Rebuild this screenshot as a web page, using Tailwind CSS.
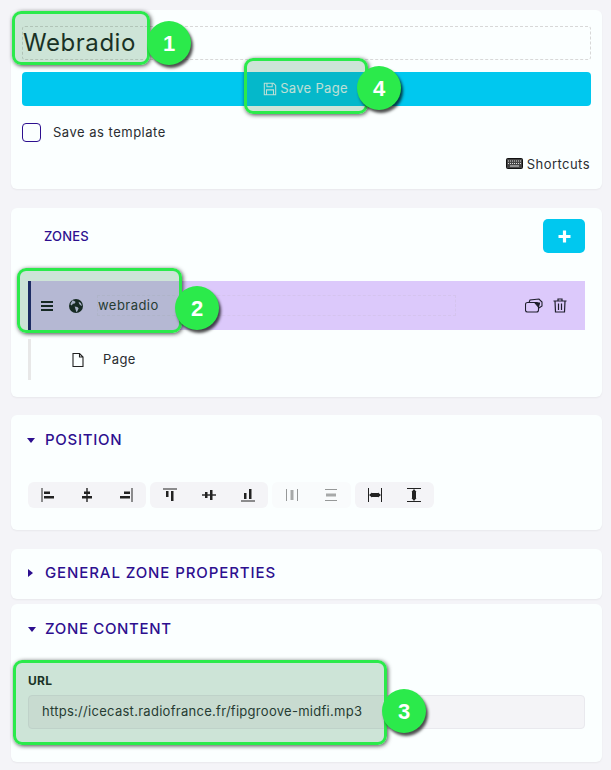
<!DOCTYPE html>
<html><head><meta charset="utf-8"><script src="https://cdn.jsdelivr.net/npm/@tailwindcss/browser@4"></script></head>
<body class="bg-[#f4f4f8] font-['Inter','Liberation_Sans',sans-serif] text-[#212529]">
<div class="relative w-[611px] h-[770px] overflow-hidden pt-[10px] pl-[11px] pr-[9px] flex flex-col">

<section class="h-[179px] shrink-0 bg-[#fbffff] rounded-md shadow-[0_1px_2px_rgba(0,0,0,0.05)] pl-[11px] pr-[11px] pt-[16px]">
  <div class="h-[34px] border border-dashed border-[#d8d8d8] rounded-[3px] flex items-center text-[24px] tracking-[0.55px] text-[#1b1f23] leading-none">Webradio</div>
  <div class="mt-[12px] h-[34px] bg-[#00c8ef] rounded-[4px] flex items-center justify-center gap-[3px] pr-[2px] text-[13px] tracking-[0.3px] text-white/90">
    <svg width="14" height="14" viewBox="0 0 16 16" fill="none" stroke="currentColor" stroke-width="1.2"><path d="M1.5 1.5h10.5l2.5 2.500v10.500h-13z"/><path d="M4.500 1.500v4h6v-4M4 14.500v-5.500h8v5.500"/></svg>
    <span>Save Page</span>
  </div>
  <div class="mt-[17px] flex items-center gap-[12px]">
    <span class="w-[19px] h-[19px] border border-[#2d0f8f] rounded-[4px]"></span>
    <span class="text-[13px] tracking-[0.5px] text-[#2a2d31]">Save as template</span>
  </div>
  <div class="mt-[11px] pr-[1px] flex justify-end items-center gap-[4px] text-[13px] tracking-[0.45px] text-[#2a2d31] leading-[20px]">
    <svg width="17" height="11" viewBox="0 0 17 11"><rect x="0.500" y="0.500" width="16" height="10" rx="1" fill="#444" stroke="#111"/><path d="M2 3h13M2 5.500h13" stroke="#ddd" stroke-dasharray="1 1" fill="none"/><path d="M4 8h9" stroke="#ddd" fill="none"/></svg>
    <span>Shortcuts</span>
  </div>
</section>

<section class="mt-[19px] h-[189px] shrink-0 bg-[#fbffff] rounded-md shadow-[0_1px_2px_rgba(0,0,0,0.05)] pl-[17px] pr-[17px] pt-[11px]">
  <div class="flex items-center justify-between h-[34px]">
    <span class="pl-[16px] pt-[2px] text-[13px] tracking-[0.2px] font-medium text-[#2d0f8f]">ZONES</span>
    <span class="w-[42px] h-[34px] bg-[#00c8ef] rounded-[5px] flex items-center justify-center">
      <svg width="13" height="13" viewBox="0 0 13 13"><path d="M6.500 0.500v12M0.500 6.500h12" stroke="#fff" stroke-width="3.200"/></svg>
    </span>
  </div>
  <div class="mt-[28px] h-[49px] bg-[#dcc9fb] border-l-[3px] border-[#1f1a6e] flex items-center pl-[10px] pr-[18px]">
    <svg width="12" height="10" viewBox="0 0 12 10"><path d="M0 1h12M0 5h12M0 9h12" stroke="#14141f" stroke-width="2"/></svg>
    <svg class="ml-[16px]" width="14" height="14" viewBox="0 0 16 16"><circle cx="8" cy="8" r="8" fill="#16171f"/><path d="M4 1.500l2.500 1 1 1-1 1.500-2 .5-1.500 2-1.500-1.500z M6.500 8.500l3 .5 1.500 1.500-1.500 3.500-1 1-1-3zM11 3l2.500 1.500 1.500 3.500-2-1-1.500-1.500z" fill="#c7bce6"/></svg>
    <div class="ml-[14px] w-[359px] h-[21px] border border-dashed border-[#d5c4ee] flex items-center text-[13px] tracking-[0.45px] text-[#2a2d31]">webradio</div>
    <div class="ml-auto flex items-center gap-[10px]">
      <svg width="18" height="15" viewBox="0 0 18 15" fill="none" stroke="#1f1f2c" stroke-width="1.100"><rect x="0.500" y="4.500" width="13" height="9.500" rx="2"/><path d="M4 4.500l1-2.500 9-1 3 3v4l-3 2"/><path d="M10 5l3.500 4 1-4z" fill="#1f1f2c"/></svg>
      <svg width="14" height="15" viewBox="0 0 14 15" fill="none" stroke="#1f1f2c" stroke-width="1.200"><path d="M0.500 3h13M2 3l.5 11h9l.5-11M5 3v-2h4v2M5.500 5.500v6.500M8.500 5.500v6.500"/></svg>
    </div>
  </div>
  <div class="mt-[9px] h-[41px] border-l-[3px] border-[#e8e8e8] flex items-center pl-[41px] text-[13px] tracking-[0.4px] text-[#2a2d31]">
    <svg width="12" height="14" viewBox="0 0 12 14" fill="none" stroke="#222" stroke-width="1.100"><path d="M1 .5h6.500l3.500 3.500v9.500h-10zM7.500 .5v3.500h3.500"/></svg>
    <span class="ml-[19px]">Page</span>
  </div>
</section>

<section class="mt-[18px] h-[115px] shrink-0 bg-[#fbffff] rounded-md shadow-[0_1px_2px_rgba(0,0,0,0.05)] pl-[16px] pt-[14px]">
  <div class="flex items-center h-[22px] gap-[10px] text-[15px] tracking-[0.7px] font-medium text-[#2d0f8f]">
    <svg width="8" height="5" viewBox="0 0 8 5"><path d="M0 0h8l-4 5z" fill="#2d0f8f"/></svg><span>POSITION</span>
  </div>
  <div class="mt-[31px] ml-[1px] flex gap-[4px]">
    <div class="w-[118px] h-[26px] bg-[#f4f4f7] rounded-md flex items-center justify-around px-[1px]">
      <svg width="14" height="14" viewBox="0 0 14 14"><path d="M1 0v14" stroke="#222"/><rect x="3" y="3.500" width="6" height="2.500" fill="#222"/><rect x="3" y="8" width="10" height="2.500" fill="#222"/></svg>
      <svg width="14" height="14" viewBox="0 0 14 14"><path d="M7 0v14" stroke="#222" stroke-width="1.400"/><rect x="4" y="3.500" width="6" height="2.500" fill="#222"/><rect x="2" y="8" width="10" height="2.500" fill="#222"/></svg>
      <svg width="14" height="14" viewBox="0 0 14 14"><path d="M13 0v14" stroke="#222"/><rect x="5" y="3.500" width="6" height="2.500" fill="#222"/><rect x="1" y="8" width="10" height="2.500" fill="#222"/></svg>
    </div>
    <div class="w-[118px] h-[26px] bg-[#f4f4f7] rounded-md flex items-center justify-around px-[1px]">
      <svg width="14" height="14" viewBox="0 0 14 14"><path d="M0 1h14" stroke="#222"/><rect x="3" y="3" width="2.500" height="6" fill="#222"/><rect x="8" y="3" width="2.500" height="10" fill="#222"/></svg>
      <svg width="14" height="14" viewBox="0 0 14 14"><path d="M0 7h14" stroke="#222" stroke-width="1.400"/><rect x="3" y="4" width="2.500" height="6" fill="#222"/><rect x="8" y="2" width="2.500" height="10" fill="#222"/></svg>
      <svg width="14" height="14" viewBox="0 0 14 14"><path d="M0 13h14" stroke="#222"/><rect x="3" y="5" width="2.500" height="6" fill="#222"/><rect x="8" y="1" width="2.500" height="10" fill="#222"/></svg>
    </div>
    <div class="w-[79px] h-[26px] bg-[#f8f8fa] rounded-md flex items-center justify-around opacity-50">
      <svg width="14" height="14" viewBox="0 0 14 14"><path d="M1.500 1v12M12.500 1v12" stroke="#333"/><rect x="5.500" y="2" width="3" height="10" fill="#555"/></svg>
      <svg width="14" height="14" viewBox="0 0 14 14"><path d="M1 1.500h12M1 12.500h12" stroke="#333"/><rect x="2" y="5.500" width="10" height="3" fill="#555"/></svg>
    </div>
    <div class="w-[79px] h-[26px] bg-[#f4f4f7] rounded-md flex items-center justify-around">
      <svg width="14" height="14" viewBox="0 0 14 14"><path d="M.5 0v14M13.500 0v14" stroke="#222"/><rect x="3.500" y="5" width="7" height="4" fill="#222"/><path d="M1 7l3-2.500v5zM13 7l-3-2.500v5z" fill="#222"/></svg>
      <svg width="14" height="14" viewBox="0 0 14 14"><path d="M0 .5h14M0 13.500h14" stroke="#222"/><rect x="5" y="3.500" width="4" height="7" fill="#222"/><path d="M7 1l-2.500 3h5zM7 13l-2.500-3h5z" fill="#222"/></svg>
    </div>
  </div>
</section>

<section class="mt-[19px] h-[50px] shrink-0 bg-[#fbffff] rounded-md shadow-[0_1px_2px_rgba(0,0,0,0.05)] pl-[17px] pb-[2px] flex items-center">
  <div class="flex items-center gap-[12px] text-[15px] tracking-[0.9px] font-medium text-[#2d0f8f]">
    <svg width="5" height="8" viewBox="0 0 5 8"><path d="M0 0v8l5-4z" fill="#2d0f8f"/></svg><span>GENERAL ZONE PROPERTIES</span>
  </div>
</section>

<section class="mt-[5px] h-[158px] shrink-0 bg-[#fbffff] rounded-md shadow-[0_1px_2px_rgba(0,0,0,0.05)] pl-[17px] pr-[17px] pt-[14px]">
  <div class="flex items-center h-[22px] gap-[9px] text-[15px] tracking-[0.65px] font-medium text-[#2d0f8f]">
    <svg width="8" height="5" viewBox="0 0 8 5"><path d="M0 0h8l-4 5z" fill="#2d0f8f"/></svg><span>ZONE CONTENT</span>
  </div>
  <div class="mt-[33px] text-[12px] tracking-[0.3px] font-bold leading-[16px] text-[#1b1f23]">URL</div>
  <div class="mt-[6px] h-[34px] bg-[#f4f4f7] border border-[#e9e9ee] rounded-[4px] flex items-center pl-[13px] text-[13px] tracking-[0.28px] text-[#2a2d31]">https://icecast.radiofrance.fr/fipgroove-midfi.mp3</div>
</section>

<!-- annotations -->
<div class="absolute left-[12px] top-[11px] w-[138px] h-[54px] border-[3px] border-[#2bea4b] rounded-[9px] bg-[#197837]/20 shadow-[1px_1px_4px_rgba(0,0,0,0.7)]"></div>
<div class="absolute left-[244px] top-[58px] w-[124px] h-[56px] border-[3px] border-[#2bea4b] rounded-[9px] bg-[#197837]/20 shadow-[1px_1px_4px_rgba(0,0,0,0.7)]"></div>
<div class="absolute left-[17px] top-[268px] w-[165px] h-[65px] border-[3px] border-[#2bea4b] rounded-[9px] bg-[#197837]/20 shadow-[1px_1px_4px_rgba(0,0,0,0.7)]"></div>
<div class="absolute left-[13px] top-[660px] w-[374px] h-[85px] border-[3px] border-[#2bea4b] rounded-[9px] bg-[#197837]/20 shadow-[1px_1px_4px_rgba(0,0,0,0.7)]"></div>
<div class="absolute left-[147px] top-[21px] w-[44px] h-[44px] rounded-full bg-[#2bea4b] text-white font-bold text-[22px] flex items-center justify-center font-['Liberation_Sans'] shadow-[2px_3px_3px_rgba(0,0,0,0.7)]">1</div>
<div class="absolute left-[175px] top-[286px] w-[44px] h-[44px] rounded-full bg-[#2bea4b] text-white font-bold text-[22px] flex items-center justify-center font-['Liberation_Sans'] shadow-[2px_3px_3px_rgba(0,0,0,0.7)]">2</div>
<div class="absolute left-[382px] top-[689px] w-[44px] h-[44px] rounded-full bg-[#2bea4b] text-white font-bold text-[22px] flex items-center justify-center font-['Liberation_Sans'] shadow-[2px_3px_3px_rgba(0,0,0,0.7)]">3</div>
<div class="absolute left-[357px] top-[66px] w-[44px] h-[44px] rounded-full bg-[#2bea4b] text-white font-bold text-[22px] flex items-center justify-center font-['Liberation_Sans'] shadow-[2px_3px_3px_rgba(0,0,0,0.7)]">4</div>
</div>
</body></html>
